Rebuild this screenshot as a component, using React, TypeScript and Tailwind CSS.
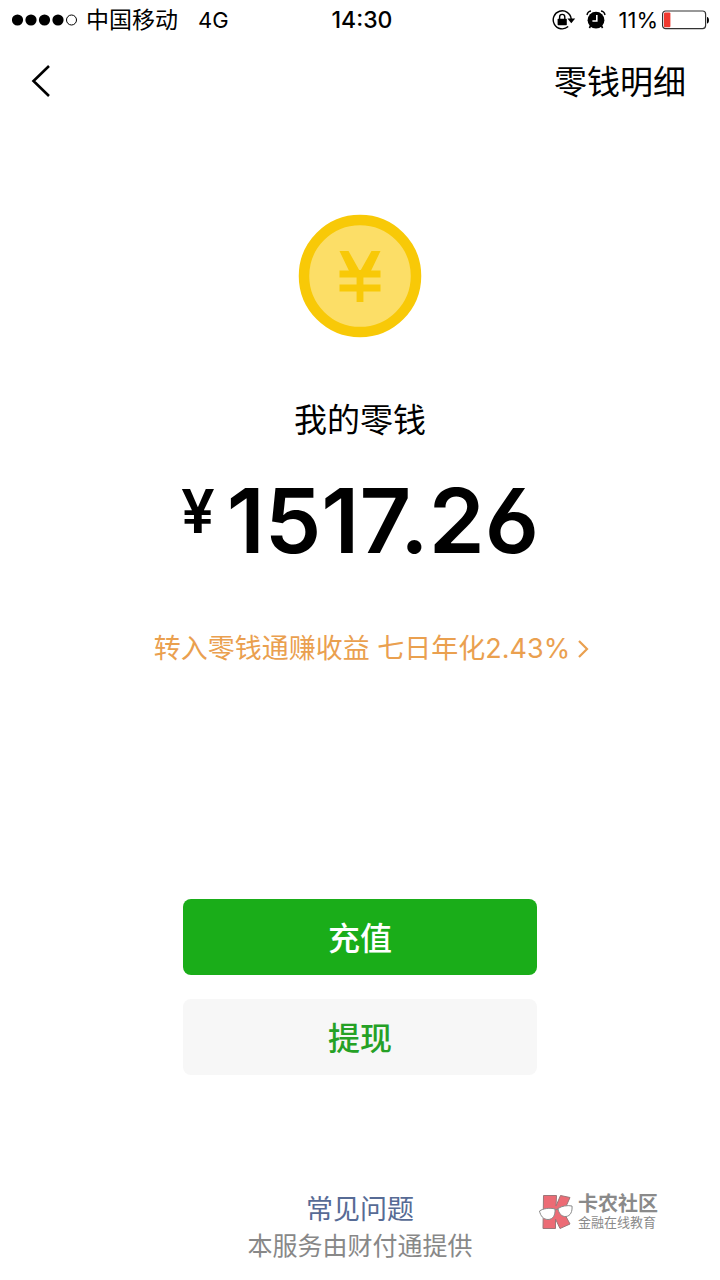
import React from "react";

const SignalDots = () => (
  <svg className="h-5 w-[66px]" viewBox="0 0 66 20" aria-hidden="true">
    {[5.5, 19, 32.5, 46].map((cx) => (
      <circle key={cx} cx={cx} cy="10" r="5.6" fill="black" />
    ))}
    <circle cx="59.5" cy="10" r="5" fill="none" stroke="black" strokeWidth="1" />
  </svg>
);

const RotationLockIcon = () => (
  <svg className="h-5 w-6" viewBox="0 0 24 20" fill="none" aria-hidden="true">
    <path d="M16.2 16.6A9 9 0 1 1 19.2 9" stroke="black" strokeWidth="1.4" />
    <path d="M15.4 8.6h7.8l-3.9 4.6z" fill="black" />
    <rect x="5.6" y="8.8" width="9.2" height="6.4" rx="0.6" fill="black" />
    <path d="M7.6 9.4V7a2.6 2.6 0 0 1 5.2 0v2.4" stroke="black" strokeWidth="1.4" />
  </svg>
);

const AlarmIcon = () => (
  <svg className="h-5 w-5" viewBox="0 0 20 20" fill="none" aria-hidden="true">
    <circle cx="10" cy="10.2" r="8.4" fill="black" />
    <path
      d="M1 5C1.4 2.8 2.8 1.3 5 1M19 5C18.6 2.8 17.2 1.3 15 1"
      stroke="black"
      strokeWidth="1.4"
    />
    <path d="M4.5 16 3.4 18M15.5 16l1.1 2" stroke="black" strokeWidth="1.6" />
    <path d="M10.8 5v6H6.4" stroke="white" strokeWidth="1.6" />
  </svg>
);

const BatteryIcon = () => (
  <svg className="h-5 w-12" viewBox="0 0 48 20" fill="none" aria-hidden="true">
    <rect x="0.6" y="1" width="43" height="17.6" rx="3" stroke="#333333" strokeWidth="1.2" />
    <rect x="2" y="2.4" width="6.4" height="14.8" rx="1" fill="#f0392f" />
    <path d="M45 7c2.6 0 2.6 6.5 0 6.5z" fill="black" />
  </svg>
);

const CoinIcon = () => (
  <svg className="h-[124px] w-[124px]" viewBox="0 0 124 124" fill="none" aria-hidden="true">
    <circle cx="62" cy="62" r="56" fill="#fcde67" stroke="#f8c907" strokeWidth="10.5" />
    <path d="M41.5 60h41M41.5 74h41M62 56v32" stroke="#f8c907" strokeWidth="6.8" />
    <path d="M41.5 37h9L62 57.5 73.5 37h9L71.5 60h-19z" fill="#f8c907" />
  </svg>
);

const StatusBar = () => (
  <div className="grid h-10 grid-cols-3 items-center pl-3 pr-2 text-[22px] leading-10">
    <div className="flex items-center whitespace-nowrap">
      <SignalDots />
      <span className="ml-2 text-[23px]">中国移动</span>
      <span className="ml-5">4G</span>
    </div>
    <span className="text-center text-[23px] font-medium">14:30</span>
    <div className="mr-0.5 flex items-center justify-end">
      <RotationLockIcon />
      <span className="ml-2.5 mr-3">
        <AlarmIcon />
      </span>
      <span className="mr-1">11%</span>
      <BatteryIcon />
    </div>
  </div>
);

const Watermark = () => (
  <div className="absolute bottom-[50px] right-[62px] flex items-center gap-1 text-[#8a8a8a]">
    <svg className="h-9 w-9" viewBox="0 0 36 36" fill="none" aria-hidden="true">
      <path
        d="M5.5 1.5H18.5L18 12 22.5 1.5 32 3.5 25.5 18 32 30 22 34.5 17.5 25V34.5H5z"
        fill="#ec6b75"
        stroke="#9c7779"
        strokeWidth="1"
      />
      <path
        d="M1.5 17C5 14.5 12 13.5 17 15c.5 6-2 10.5-7 10.5-4.5 0-7.5-3.5-8.5-8.5zM20 14.5c4-2.5 9-3.5 14-2.5.5 5.5-1.5 10-6 10.5-4.5.4-7.5-3.5-8-8z"
        fill="white"
        stroke="#8a8a8a"
        strokeWidth="1"
      />
      <path d="M17 16 20 15" stroke="#8a8a8a" />
    </svg>
    <div className="flex flex-col">
      <span className="text-xl font-bold leading-5">卡农社区</span>
      <span className="text-[13px] leading-4">金融在线教育</span>
    </div>
  </div>
);

const App = () => {
  return (
    <div className="relative flex min-h-screen flex-col bg-white font-['Inter','Noto_Sans_CJK_SC',sans-serif] text-black">
      <StatusBar />
      <header className="flex h-[84px] items-center justify-between pl-7 pr-[34px]">
        <button type="button" aria-label="返回">
          <svg className="h-9 w-6" viewBox="0 0 24 36" fill="none" aria-hidden="true">
            <path d="M21 2 5.5 17 21 32" stroke="black" strokeWidth="2.6" />
          </svg>
        </button>
        <a href="#" className="text-[33px] leading-10">
          零钱明细
        </a>
      </header>

      <main className="flex grow flex-col items-center pt-[90px]">
        <CoinIcon />
        <h1 className="mt-[62px] text-[33px] leading-10">我的零钱</h1>
        <p className="mt-[31px] flex items-start font-semibold">
          <span className="mr-3 text-[60px] leading-[80px]">¥</span>
          <span className="text-[90px] leading-[100px] [font-feature-settings:'cv03']">
            1517.26
          </span>
        </p>
        <a
          href="#"
          className="ml-6 mt-[58px] flex items-center gap-2 text-[27px] leading-10 text-[#eaa04f]"
        >
          <span>转入零钱通赚收益 七日年化2.43%</span>
          <svg className="h-5 w-3" viewBox="0 0 12 20" fill="none" aria-hidden="true">
            <path d="m1 2 8 8-8 8" stroke="currentColor" strokeWidth="2.2" />
          </svg>
        </a>
        <div className="mt-[230px] flex w-[354px] flex-col gap-6 text-[32px] font-medium leading-10">
          <button type="button" className="h-[76px] rounded-lg bg-[#1aad19] pt-1 text-white">
            充值
          </button>
          <button type="button" className="h-[76px] rounded-lg bg-[#f7f7f7] pt-1 text-[#25a125]">
            提现
          </button>
        </div>
      </main>

      <footer className="flex flex-col items-center pb-4">
        <a href="#" className="text-[27px] leading-9 text-[#576b95]">
          常见问题
        </a>
        <p className="text-[25px] leading-9 text-[#888888]">本服务由财付通提供</p>
      </footer>
      <Watermark />
    </div>
  );
};

export default App;
